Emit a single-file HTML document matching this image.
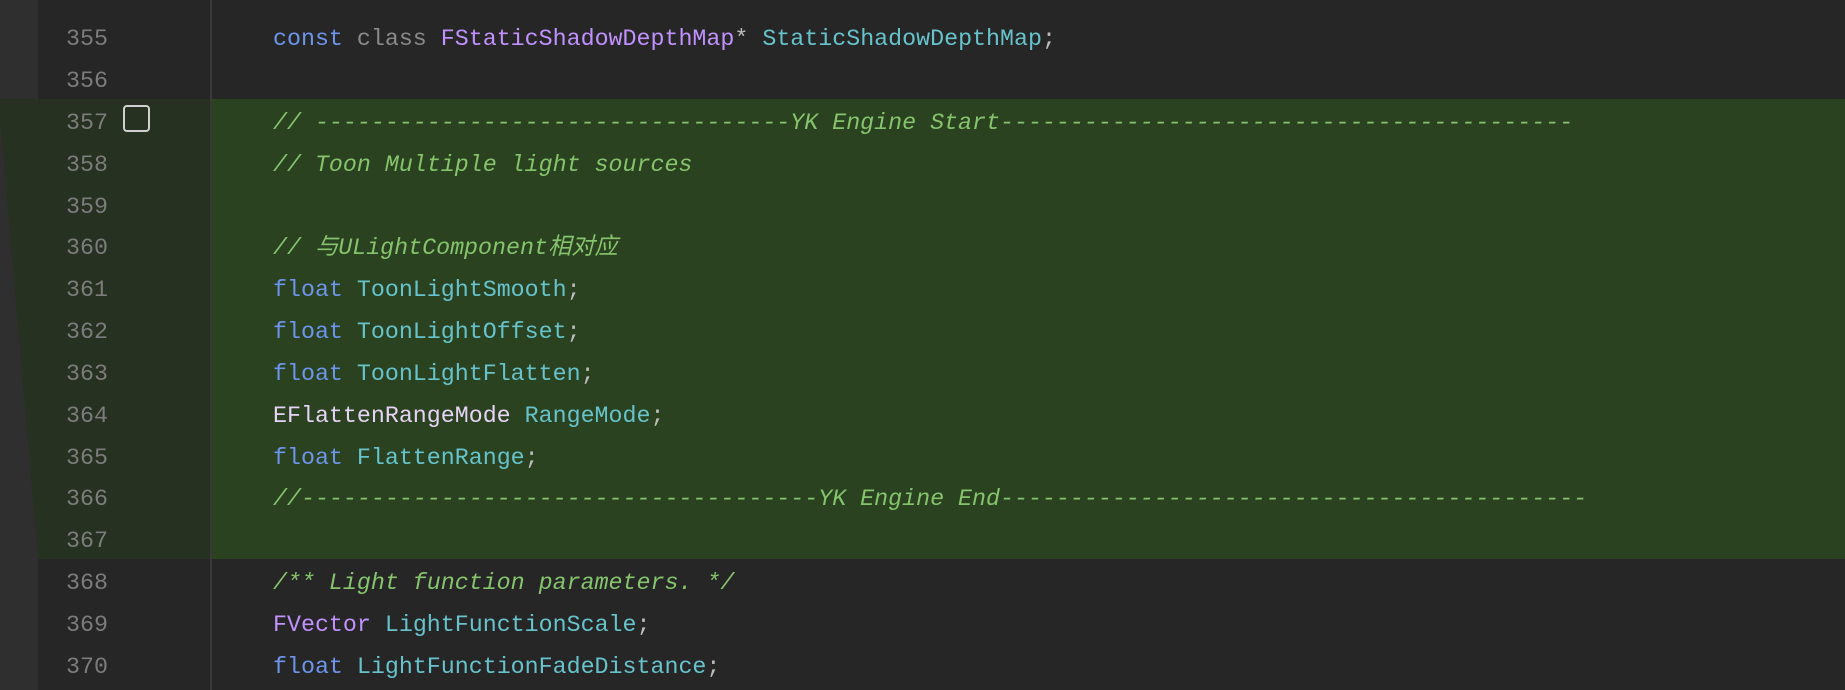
<!DOCTYPE html>
<html><head><meta charset="utf-8"><style>
body{margin:0;width:1845px;height:690px;overflow:hidden;background:#262626;position:relative;font-family:"Liberation Mono","Noto Sans CJK SC",monospace;font-size:23.3px}
.strip{position:absolute;left:0;top:0;width:38px;height:690px;background:#2f2f2f}
.gut{position:absolute;left:38px;top:0;width:173px;height:690px;background:#262626}
.bord{position:absolute;left:210px;top:0;width:2px;height:690px;background:#393939}
.ggut{position:absolute;left:0;top:99px;width:211px;height:460px;background:#263122;clip-path:polygon(0 0,100% 0,100% 100%,38px 100%,0 20px)}
.gcode{position:absolute;left:212px;top:99px;width:1633px;height:460px;background:#2a4220}
.ln{position:absolute;left:0;width:108px;text-align:right;color:#7c7c7c;height:42px;line-height:42px;margin-top:3px}
.cd{position:absolute;left:273px;white-space:pre;height:42px;line-height:42px;color:#bdbdbd;margin-top:3px}
.k{color:#6c95eb}.g{color:#8a8a8a}.p{color:#c191ff}.c{color:#66c3cc}.m{color:#85c46c;font-style:italic}.w{color:#e6d3f5}
.cb{position:absolute;left:123px;top:105px;width:23px;height:23px;border:2px solid #d0d0d0;border-radius:4px}
</style></head><body>
<div class="strip"></div><div class="gut"></div><div class="ggut"></div><div class="gcode"></div><div class="bord"></div>
<div class="cb"></div>
<div class="ln" style="top:-30px">354</div>
<div class="ln" style="top:15px">355</div>
<div class="ln" style="top:57px">356</div>
<div class="ln" style="top:99px">357</div>
<div class="ln" style="top:141px">358</div>
<div class="ln" style="top:183px">359</div>
<div class="ln" style="top:224px">360</div>
<div class="ln" style="top:266px">361</div>
<div class="ln" style="top:308px">362</div>
<div class="ln" style="top:350px">363</div>
<div class="ln" style="top:392px">364</div>
<div class="ln" style="top:434px">365</div>
<div class="ln" style="top:475px">366</div>
<div class="ln" style="top:517px">367</div>
<div class="ln" style="top:559px">368</div>
<div class="ln" style="top:601px">369</div>
<div class="ln" style="top:643px">370</div>
<div class="cd" style="top:15px"><span class="k">const</span> <span class="g">class</span> <span class="p">FStaticShadowDepthMap</span>* <span class="c">StaticShadowDepthMap</span>;</div>
<div class="cd m" style="top:99px">// ----------------------------------YK Engine Start-----------------------------------------</div>
<div class="cd m" style="top:141px">// Toon Multiple light sources</div>
<div class="cd m" style="top:224px">// 与ULightComponent相对应</div>
<div class="cd" style="top:266px"><span class="k">float</span> <span class="c">ToonLightSmooth</span>;</div>
<div class="cd" style="top:308px"><span class="k">float</span> <span class="c">ToonLightOffset</span>;</div>
<div class="cd" style="top:350px"><span class="k">float</span> <span class="c">ToonLightFlatten</span>;</div>
<div class="cd" style="top:392px"><span class="w">EFlattenRangeMode</span> <span class="c">RangeMode</span>;</div>
<div class="cd" style="top:434px"><span class="k">float</span> <span class="c">FlattenRange</span>;</div>
<div class="cd m" style="top:475px">//-------------------------------------YK Engine End------------------------------------------</div>
<div class="cd m" style="top:559px">/** Light function parameters. */</div>
<div class="cd" style="top:601px"><span class="p">FVector</span> <span class="c">LightFunctionScale</span>;</div>
<div class="cd" style="top:643px"><span class="k">float</span> <span class="c">LightFunctionFadeDistance</span>;</div>
</body></html>
